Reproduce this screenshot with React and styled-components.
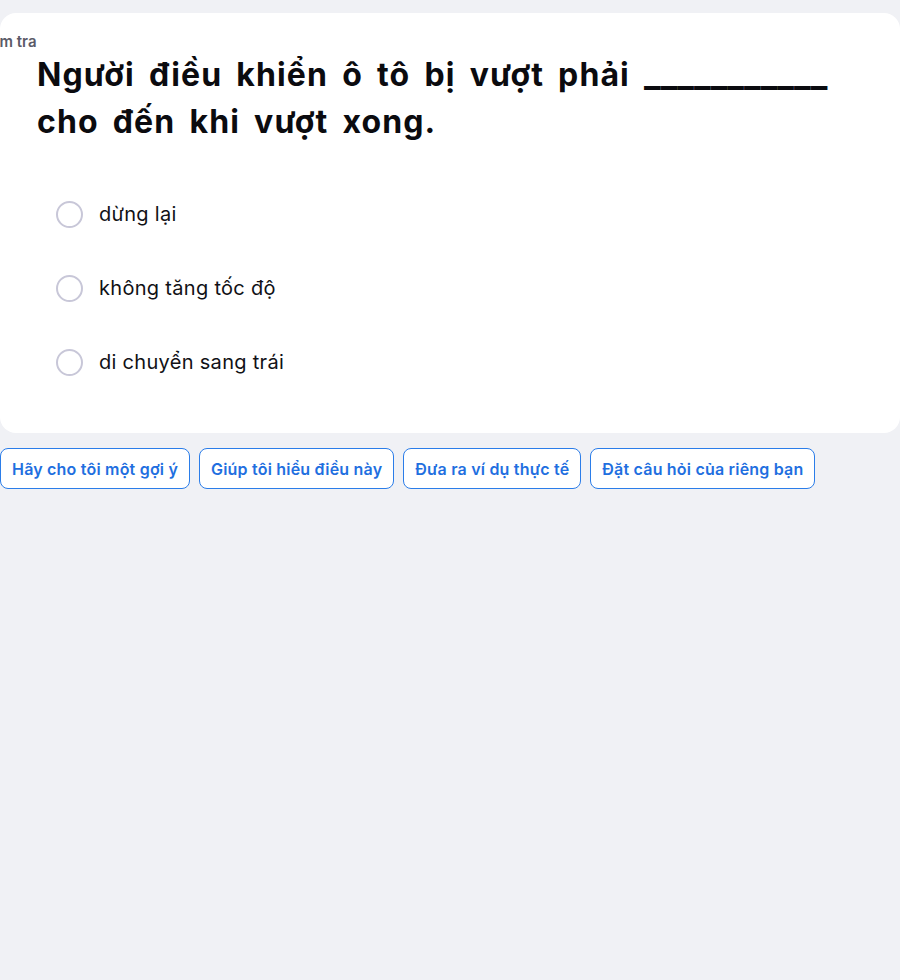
import React from "react";
import styled, { createGlobalStyle } from "styled-components";

const Global = createGlobalStyle`
  html, body { margin: 0; padding: 0; background: #f0f1f5; }
  body { font-family: Inter, "Noto Sans", sans-serif; overflow: hidden; }
`;

const Page = styled.div`
  width: 900px;
  height: 980px;
  padding-top: 13px;
  box-sizing: border-box;
  display: flex;
  flex-direction: column;
`;

const Card = styled.section`
  position: relative;
  width: 900px;
  background: #ffffff;
  border-radius: 16px;
  padding: 38px 0 57px 37px;
  box-sizing: border-box;
`;

const Tag = styled.span`
  position: absolute;
  left: -24px;
  top: 19px;
  font-size: 15px;
  font-weight: 600;
  color: #5b5b68;
`;

const Question = styled.h1`
  margin: 0;
  font-size: 32px;
  line-height: 47px;
  font-weight: 700;
  color: #0b0b0f;
  letter-spacing: 1.1px;
  word-spacing: 5.5px;
  max-width: 820px;
`;

const Blank = styled.span`
  font-size: 35px;
  letter-spacing: 0;
  line-height: 0;
`;

const Options = styled.div`
  display: flex;
  flex-direction: column;
  gap: 46px;
  margin-top: 55px;
  padding-left: 19px;
`;

const Option = styled.label`
  display: flex;
  align-items: center;
  gap: 16px;
  font-size: 20px;
  letter-spacing: 0.3px;
  color: #111116;
  height: 28px;
`;

const Radio = styled.span`
  width: 23px;
  height: 23px;
  border: 2px solid #c8c7d8;
  border-radius: 50%;
  flex: none;
`;

const Chips = styled.div`
  display: flex;
  gap: 9px;
  margin-top: 15px;
`;

const Chip = styled.button`
  height: 41px;
  padding: 0 11px;
  border: 1px solid #2b7de9;
  border-radius: 8px;
  background: #ffffff;
  color: #1f6fe0;
  font-family: Inter, "Noto Sans", sans-serif;
  font-size: 16px;
  letter-spacing: 0.2px;
  font-weight: 600;
  cursor: pointer;
`;

const options = ["dừng lại", "không tăng tốc độ", "di chuyển sang trái"];
const chips = [
  "Hãy cho tôi một gợi ý",
  "Giúp tôi hiểu điều này",
  "Đưa ra ví dụ thực tế",
  "Đặt câu hỏi của riêng bạn",
];

export default function App() {
  return (
    <>
      <Global />
      <Page>
        <Card>
          <Tag>Kiểm tra</Tag>
          <Question>
            Người điều khiển ô tô bị vượt phải <Blank>___________</Blank> cho đến khi vượt xong.
          </Question>
          <Options>
            {options.map((o) => (
              <Option key={o}>
                <Radio />
                {o}
              </Option>
            ))}
          </Options>
        </Card>
        <Chips>
          {chips.map((c) => (
            <Chip key={c}>{c}</Chip>
          ))}
        </Chips>
      </Page>
    </>
  );
}
